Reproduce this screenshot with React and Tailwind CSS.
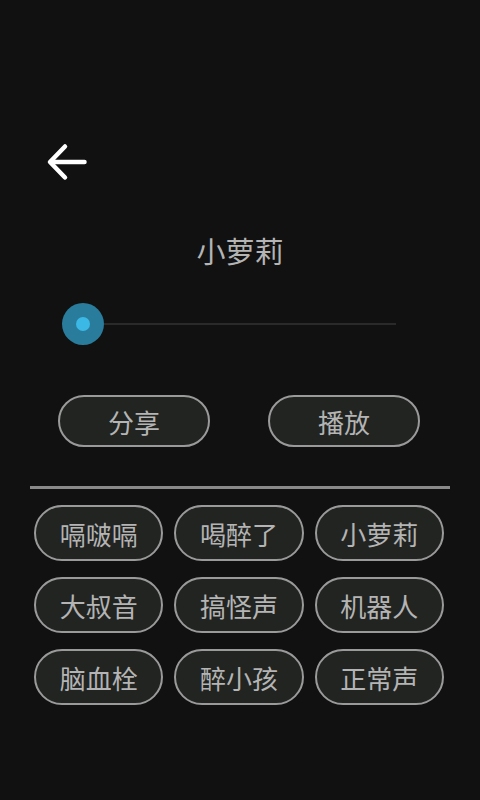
import React from "react";

const effects = [
    "嗝啵嗝", "喝醉了", "小萝莉",
    "大叔音", "搞怪声", "机器人",
    "脑血栓", "醉小孩", "正常声",
];

const App = () => {
    return <>
        <div
            className="w-[480px] h-[800px] bg-[#111111] flex flex-col text-[#b4b4b4]"
            style={{ fontFamily: '"Noto Sans CJK SC", "Noto Sans", sans-serif' }}
        >
            {/* Back Arrow */}
            <div className="pt-[142px] pl-[46px]">
                <svg width="42" height="40" viewBox="0 0 42 40" fill="none">
                    <path d="M38.5 20 H6" stroke="#ffffff" strokeWidth="4.5" strokeLinecap="round" />
                    <path d="M19 4.5 L4 20 L19 35.5" stroke="#ffffff" strokeWidth="4.5" strokeLinecap="round" strokeLinejoin="round" />
                </svg>
            </div>

            {/* Title */}
            <div className="mt-[48px] h-[40px] flex items-center justify-center text-[29px] leading-none">
                小萝莉
            </div>

            {/* Slider */}
            <div className="mt-[33px] ml-[62px] w-[334px] h-[42px] flex items-center">
                <div className="w-[42px] h-[42px] rounded-full bg-[#2a7c9c] flex items-center justify-center shrink-0">
                    <div className="w-[14px] h-[14px] rounded-full bg-[#3bb8e6]" />
                </div>
                <div className="flex-1 h-[2px] bg-[#2a2a2a]" />
            </div>

            {/* Share / Play */}
            <div className="mt-[50px] flex justify-between pl-[58px] pr-[60px]">
                <button className="w-[152px] h-[52px] rounded-full border-2 border-[#9a9a9a] bg-[#222422] text-[26px] text-[#b4b4b4]">
                    分享
                </button>
                <button className="w-[152px] h-[52px] rounded-full border-2 border-[#9a9a9a] bg-[#222422] text-[26px] text-[#b4b4b4]">
                    播放
                </button>
            </div>

            {/* Divider */}
            <div className="mt-[39px] ml-[30px] w-[420px] h-[3px] bg-[#8a8a8a]" />

            {/* Effects Grid */}
            <div className="mt-[16px] ml-[34px] w-[410px] grid grid-cols-3 gap-x-[11px] gap-y-[16px]">
                {effects.map((name, index) => {
                    return <button
                        key={`effect-${index}`}
                        className="h-[56px] rounded-full border-2 border-[#9a9a9a] bg-[#222422] text-[26px] text-[#b4b4b4]"
                    >
                        {name}
                    </button>;
                })}
            </div>
        </div>
    </>;
};

export default App;
